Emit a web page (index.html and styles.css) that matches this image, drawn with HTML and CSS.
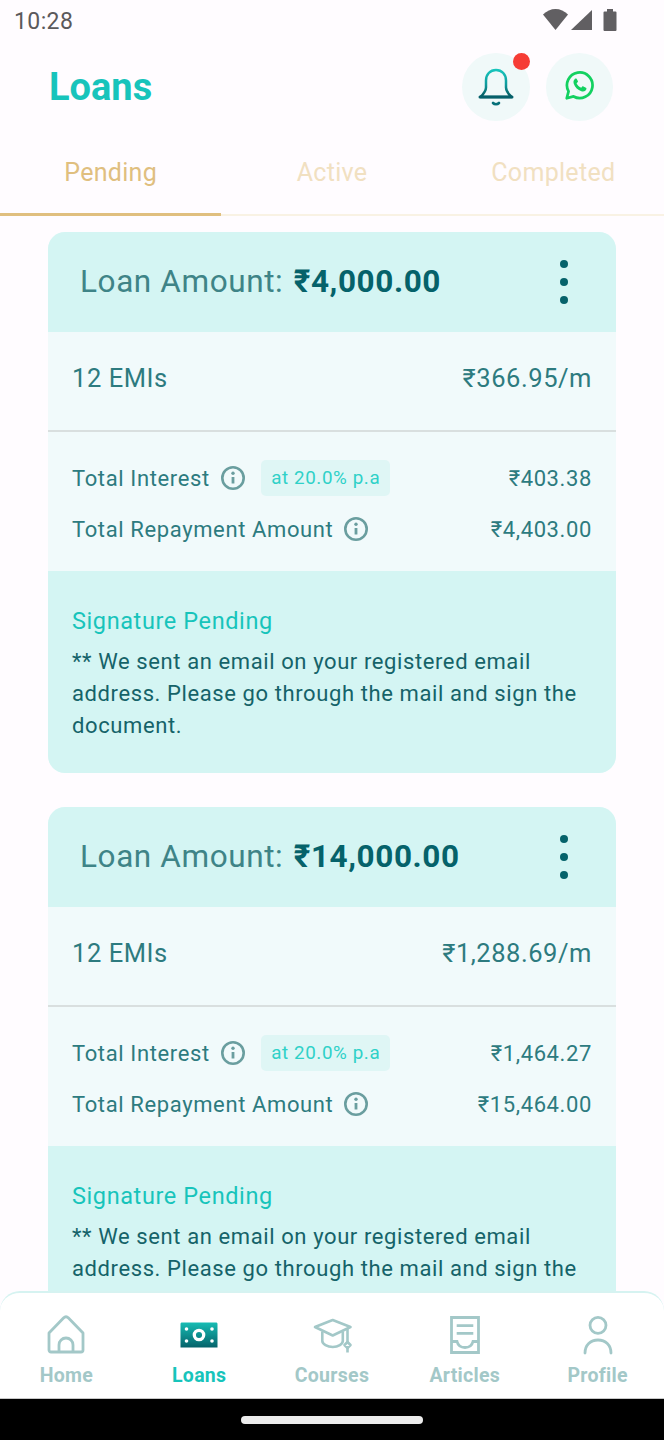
FILE: index.html
```html
<!DOCTYPE html>
<html lang="en">
<head>
<meta charset="utf-8">
<title>Loans</title>
<link rel="stylesheet" href="styles.css">
</head>
<body>
<div class="phone">
  <div class="status">
    <span class="time">10:28</span>
    <svg class="status-icons" width="80" height="24" viewBox="0 0 80 24">
      <path d="M3 6.500C6.500 3 11 1 15.500 1S24.500 3 28 6.500L15.500 22Z" fill="#615f62"/>
      <path d="M31 22 52 2V22Z" fill="#615f62"/>
      <path d="M64.500 3.500H67V1h6v2.500h2.500a1 1 0 0 1 1 1V22a1 1 0 0 1-1 1h-11a1 1 0 0 1-1-1V4.500a1 1 0 0 1 1-1Z" fill="#615f62"/>
    </svg>
  </div>

  <header class="topbar">
    <h1 class="title">Loans</h1>
    <div class="actions">
      <div class="round">
        <svg width="40" height="44" viewBox="0 0 40 44" fill="none">
          <defs>
            <linearGradient id="bellg" x1="0" y1="0" x2="0" y2="1">
              <stop offset="0" stop-color="#17c4bb"/>
              <stop offset=".55" stop-color="#0f9a9c"/>
              <stop offset="1" stop-color="#05565c"/>
            </linearGradient>
          </defs>
          <path d="M4.500 32c3-3 5.500-6 5.500-9.500v-7C10 9.500 14 5 20 5s10 4.500 10 10.500v7c0 3.500 2.500 6.500 5.500 9.500Z" stroke="url(#bellg)" stroke-width="2.500" stroke-linejoin="round"/>
          <path d="M4 32h32" stroke="#05606a" stroke-width="3" stroke-linecap="round"/>
          <path d="M17 38c1.500 1.600 4.500 1.600 6 0" stroke="#067079" stroke-width="2.600" stroke-linecap="round"/>
        </svg>
        <span class="dot"></span>
      </div>
      <div class="round">
        <svg class="wa" width="31" height="31" viewBox="0 0 34 34" fill="none">
          <path d="M3 31l2-7.500A14 14 0 1 1 10.500 29Z" stroke="#12d160" stroke-width="3" stroke-linejoin="round"/>
          <path d="M12.500 9.500c-1.800.8-2.600 3-1.800 5.500 1.300 3.800 4.500 7 8.300 8.300 2.500.8 4.600 0 5.400-1.800.4-.8.300-1.500-.3-1.900l-2.800-1.500c-.6-.3-1.100-.2-1.500.3l-.9 1.100c-2.300-1-4.100-2.800-5.100-5.100l1.100-.9c.5-.4.600-.9.300-1.500l-1.400-2.300c-.3-.5-1.200-.6-2.300-.2Z" fill="#12d160"/>
        </svg>
      </div>
    </div>
  </header>

  <nav class="tabs">
    <div class="tab tab-on">Pending</div>
    <div class="tab">Active</div>
    <div class="tab">Completed</div>
  </nav>

  <main class="list">
    <article class="card">
      <div class="card-head">
        <div class="amount">Loan Amount: <b>₹4,000.00</b></div>
        <div class="kebab"><i></i><i></i><i></i></div>
      </div>
      <div class="emi"><span>12 EMIs</span><span>₹366.95/m</span></div>
      <div class="detail">
        <div class="row">
          <span class="label">Total Interest</span>
          <svg class="info" viewBox="0 0 26 26" fill="none"><circle cx="13" cy="13" r="10.700" stroke="#6a9e9f" stroke-width="2.600"/><circle cx="13" cy="8.300" r="1.700" fill="#6a9e9f"/><path d="M13 12v6.500" stroke="#6a9e9f" stroke-width="2.800"/></svg>
          <span class="rate">at 20.0% p.a</span>
          <span class="val">₹403.38</span>
        </div>
        <div class="row">
          <span class="label">Total Repayment Amount</span>
          <svg class="info" viewBox="0 0 26 26" fill="none"><circle cx="13" cy="13" r="10.700" stroke="#6a9e9f" stroke-width="2.600"/><circle cx="13" cy="8.300" r="1.700" fill="#6a9e9f"/><path d="M13 12v6.500" stroke="#6a9e9f" stroke-width="2.800"/></svg>
          <span class="val">₹4,403.00</span>
        </div>
      </div>
      <div class="note">
        <div class="note-title">Signature Pending</div>
        <p class="note-text">** We sent an email on your registered email address. Please go through the mail and sign the document.</p>
      </div>
    </article>

    <article class="card">
      <div class="card-head">
        <div class="amount">Loan Amount: <b>₹14,000.00</b></div>
        <div class="kebab"><i></i><i></i><i></i></div>
      </div>
      <div class="emi"><span>12 EMIs</span><span>₹1,288.69/m</span></div>
      <div class="detail">
        <div class="row">
          <span class="label">Total Interest</span>
          <svg class="info" viewBox="0 0 26 26" fill="none"><circle cx="13" cy="13" r="10.700" stroke="#6a9e9f" stroke-width="2.600"/><circle cx="13" cy="8.300" r="1.700" fill="#6a9e9f"/><path d="M13 12v6.500" stroke="#6a9e9f" stroke-width="2.800"/></svg>
          <span class="rate">at 20.0% p.a</span>
          <span class="val">₹1,464.27</span>
        </div>
        <div class="row">
          <span class="label">Total Repayment Amount</span>
          <svg class="info" viewBox="0 0 26 26" fill="none"><circle cx="13" cy="13" r="10.700" stroke="#6a9e9f" stroke-width="2.600"/><circle cx="13" cy="8.300" r="1.700" fill="#6a9e9f"/><path d="M13 12v6.500" stroke="#6a9e9f" stroke-width="2.800"/></svg>
          <span class="val">₹15,464.00</span>
        </div>
      </div>
      <div class="note">
        <div class="note-title">Signature Pending</div>
        <p class="note-text">** We sent an email on your registered email address. Please go through the mail and sign the document.</p>
      </div>
    </article>
  </main>

  <footer class="bottom">
    <div class="bottom-nav">
      <div class="item">
        <svg width="44" height="44" viewBox="0 0 44 44" fill="none" stroke="#a3c8c8" stroke-width="2.800" stroke-linejoin="round">
          <path d="M5 20 19.500 5c1.500-1.500 3.500-1.500 5 0L39 20v17a2 2 0 0 1-2 2H7a2 2 0 0 1-2-2Z"/>
          <path d="M15 39v-7a7 7 0 0 1 14 0v7"/>
        </svg>
        <span>Home</span>
      </div>
      <div class="item item-on">
        <svg width="44" height="44" viewBox="0 0 44 44">
          <defs>
            <linearGradient id="cash" x1="0" y1="0" x2="0" y2="1">
              <stop offset="0" stop-color="#17bdb4"/>
              <stop offset="1" stop-color="#05626a"/>
            </linearGradient>
          </defs>
          <path d="M3.500 11c0-1 .6-1.500 1.500-1.500h34c.9 0 1.500.5 1.500 1.500v23.500H3.500Z" fill="url(#cash)"/>
          <circle cx="22" cy="22" r="4.700" fill="none" stroke="#fff" stroke-width="3.300"/>
          <circle cx="9.500" cy="16" r="1.800" fill="#fff"/><circle cx="35" cy="16" r="1.800" fill="#fff"/>
          <circle cx="9.500" cy="28" r="1.800" fill="#fff"/><circle cx="35" cy="28" r="1.800" fill="#fff"/>
        </svg>
        <span>Loans</span>
      </div>
      <div class="item">
        <svg width="44" height="44" viewBox="0 0 44 44" fill="none" stroke="#a3c8c8" stroke-width="2.600" stroke-linejoin="round">
          <path d="M5 14 22.700 7 40.500 14 22.700 22.500Z"/>
          <path d="M12.300 18.500V28c0 3 5 6 10.500 6s10-3 10-6v-9.500"/>
          <path d="M37.500 15v14"/>
          <path d="M37.500 29l3 3-3 3-3-3Z"/>
          <path d="M37.500 35v4.500"/>
        </svg>
        <span>Courses</span>
      </div>
      <div class="item">
        <svg width="44" height="44" viewBox="0 0 44 44" fill="none" stroke="#a3c8c8" stroke-width="2.800" stroke-linejoin="miter">
          <path d="M8.500 4.500h27v35h-27Z"/>
          <path d="M13.700 12.700h16.600M13.700 20.300h16.600"/>
          <path d="M8.500 28.500H14c1 4 4 6 8 6s7-2 8-6h5.500"/>
        </svg>
        <span>Articles</span>
      </div>
      <div class="item">
        <svg width="44" height="44" viewBox="0 0 44 44" fill="none" stroke="#a3c8c8" stroke-width="2.800" stroke-linecap="round">
          <circle cx="22" cy="12.300" r="8"/>
          <path d="M9 40c0-8 5.500-13 13-13s13 5 13 13"/>
        </svg>
        <span>Profile</span>
      </div>
    </div>
    <div class="gesture"><i></i></div>
  </footer>
</div>
</body>
</html>
```
FILE: styles.css
```css
* { box-sizing: border-box; }
html, body { margin: 0; padding: 0; }
body {
  font-family: Roboto, "Noto Sans", sans-serif;
  background: #fffcff;
}
.phone {
  position: relative;
  width: 664px;
  height: 1440px;
  overflow: hidden;
  display: flex;
  flex-direction: column;
  background: #fffcff;
}

.status {
  height: 42px;
  flex: none;
  display: flex;
  align-items: center;
  justify-content: space-between;
  padding: 0 44px 0 14px;
}
.time { font-size: 23px; color: #5b595c; letter-spacing: .4px; }
.status-icons { display: block; margin-top: -2px; }

.topbar {
  flex: none;
  height: 91px;
  display: flex;
  align-items: center;
  justify-content: space-between;
  padding: 0 51px 0 49px;
}
.title {
  margin: 0 0 2px;
  font-size: 38px;
  font-weight: 700;
  color: #17c4bb;
}
.actions { display: flex; gap: 16px; margin-top: -1px; }
.round {
  position: relative;
  width: 67.500px;
  height: 68px;
  border-radius: 50%;
  background: #f0f9f9;
  display: flex;
  align-items: center;
  justify-content: center;
}
.wa { margin-bottom: 3px; }
.dot {
  position: absolute;
  top: 0;
  right: 0;
  width: 17px;
  height: 17px;
  border-radius: 50%;
  background: #f63c35;
}

.tabs {
  flex: none;
  height: 83px;
  display: flex;
  border-bottom: 2px solid #f9f2e4;
}
.tab {
  flex: 1;
  display: flex;
  align-items: center;
  justify-content: center;
  padding-bottom: 2px;
  font-size: 25px;
  letter-spacing: .3px;
  color: #f1e0c1;
}
.tab-on {
  color: #e0bf7f;
  border-bottom: 3px solid #e0bf7f;
  margin-bottom: -2px;
  padding-bottom: 1px;
}

.list {
  flex: 1;
  min-height: 0;
  overflow: hidden;
  padding: 16px 48.500px 0 48px;
  display: flex;
  flex-direction: column;
  gap: 34px;
}
.card {
  flex: none;
  border-radius: 17px;
  overflow: hidden;
  background: #f1fafb;
}
.card-head {
  height: 100px;
  padding: 0 47.500px 1px 32px;
  background: #d4f5f3;
  display: flex;
  align-items: center;
  justify-content: space-between;
}
.amount {
  font-size: 31.500px;
  letter-spacing: .6px;
  color: #3e8487;
}
.amount b { margin-left: 2px; font-weight: 700; color: #05626a; }
.kebab { display: flex; flex-direction: column; gap: 10px; margin-top: 1px; }
.kebab i {
  display: block;
  width: 8px;
  height: 8px;
  border-radius: 50%;
  background: #05626a;
}
.emi {
  height: 100px;
  padding: 0 23.500px 6px 24px;
  display: flex;
  align-items: center;
  justify-content: space-between;
  font-size: 25.500px;
  letter-spacing: .55px;
  color: #2d7b7f;
  border-bottom: 2px solid #d9dfdf;
}
.detail {
  height: 139px;
  padding: 28px 23.500px 0 24px;
  display: flex;
  flex-direction: column;
  gap: 15px;
}
.row {
  height: 36px;
  display: flex;
  align-items: center;
  gap: 10px;
  font-size: 22px;
  letter-spacing: .62px;
  color: #2d7b7f;
}
.info { width: 26px; height: 26px; flex: none; }
.rate {
  margin-left: 5.500px;
  height: 36px;
  padding: 0 10px;
  display: flex;
  align-items: center;
  font-size: 18.800px;
  letter-spacing: .6px;
  border-radius: 5px;
  color: #2fd1c8;
  background: #dff6f5;
}
.val { margin-left: auto; }
.note {
  height: 202px;
  padding: 34px 24px 0;
  background: #d4f5f3;
}
.note-title {
  font-size: 23.500px;
  letter-spacing: .6px;
  line-height: 32px;
  color: #17c4bb;
}
.note-text {
  margin: 9px 0 0;
  font-size: 22px;
  letter-spacing: .6px;
  line-height: 32px;
  color: #156369;
}

.bottom {
  position: absolute;
  left: 0;
  right: 0;
  bottom: 0;
}
.bottom-nav {
  height: 108px;
  padding: 20px 0 0;
  display: flex;
  background: #fff;
  border-top: 2px solid #d6f3f1;
  border-radius: 20px 20px 0 0;
  border-bottom: 1px solid #c8c8c8;
}
.item {
  flex: 1;
  display: flex;
  flex-direction: column;
  align-items: center;
  gap: 7px;
  font-size: 19.500px;
  font-weight: 700;
  letter-spacing: .3px;
  color: #a3c8c8;
}
.item svg { display: block; }
.item-on { color: #17c4bb; }
.gesture {
  height: 41px;
  background: #000;
  display: flex;
  justify-content: center;
  padding-top: 17px;
}
.gesture i {
  display: block;
  width: 182px;
  height: 8px;
  border-radius: 4px;
  background: #ececec;
}
```
